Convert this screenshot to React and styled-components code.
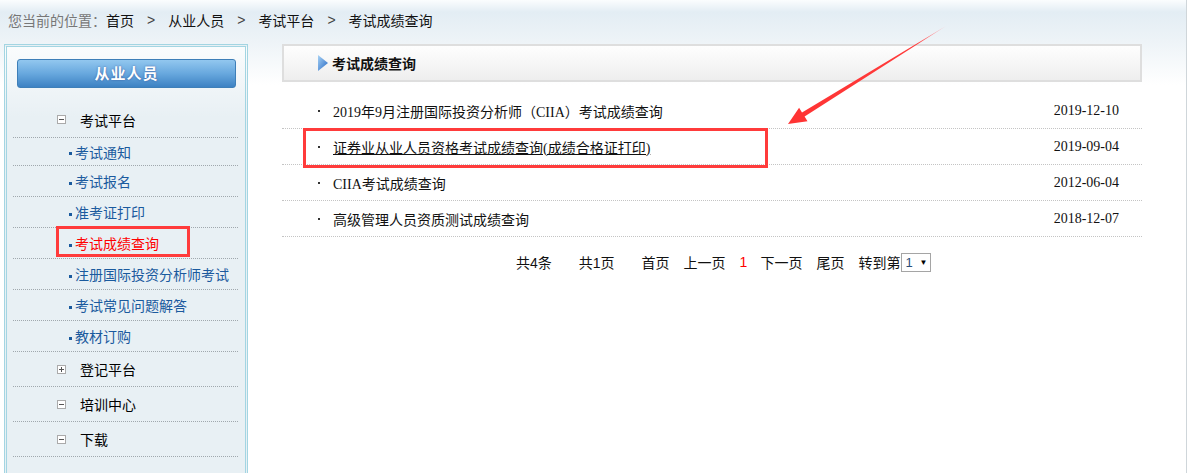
import React from "react";
import styled, { createGlobalStyle } from "styled-components";

const GlobalStyle = createGlobalStyle`
  body {
    margin: 0;
    background: #fff;
    font-family: "Liberation Sans", "Noto Sans CJK SC", sans-serif;
    font-size: 14px;
  }
  ul { margin: 0; padding: 0; list-style: none; }
  a { color: inherit; text-decoration: none; }
`;

const menu = [
  { title: "考试平台", open: true, items: ["考试通知", "考试报名", "准考证打印", "考试成绩查询", "注册国际投资分析师考试", "考试常见问题解答", "教材订购"] },
  { title: "登记平台", open: false, items: [] },
  { title: "培训中心", open: true, items: [] },
  { title: "下载", open: true, items: [] },
];

const news = [
  { title: "2019年9月注册国际投资分析师（CIIA）考试成绩查询", date: "2019-12-10" },
  { title: "证券业从业人员资格考试成绩查询(成绩合格证打印)", date: "2019-09-04", link: true },
  { title: "CIIA考试成绩查询", date: "2012-06-04" },
  { title: "高级管理人员资质测试成绩查询", date: "2018-12-07" },
];

const pager = [
  { text: "共4条", mr: 27 },
  { text: "共1页", mr: 27 },
  { text: "首页", mr: 14 },
  { text: "上一页", mr: 14 },
  { text: "1", mr: 13, current: true },
  { text: "下一页", mr: 14 },
  { text: "尾页", mr: 14 },
  { text: "转到第", mr: 1 },
];

function App() {
  return (
    <Page>
      <GlobalStyle />
      <Crumbs>
        <Here>您当前的位置：</Here>
        <a href="#">首页</a>
        <Sep>&gt;</Sep>
        <a href="#">从业人员</a>
        <Sep>&gt;</Sep>
        <a href="#">考试平台</a>
        <Sep>&gt;</Sep>
        <span>考试成绩查询</span>
      </Crumbs>
      <Columns>
        <Sidebar>
          <SideButton>从业人员</SideButton>
          <Menu>
            {menu.map((g) => (
              <React.Fragment key={g.title}>
                <GroupHead>
                  <Toggle open={g.open} />
                  {g.title}
                </GroupHead>
                {g.items.map((it) => (
                  <SubItem key={it} active={it === "考试成绩查询"}>
                    <a href="#">{it}</a>
                  </SubItem>
                ))}
              </React.Fragment>
            ))}
          </Menu>
        </Sidebar>
        <Main>
          <TitleBar>
            <svg width="10" height="16" viewBox="0 0 10 16">
              <defs>
                <linearGradient id="tri" x1="0" y1="0" x2="1" y2="1">
                  <stop offset="0" stopColor="#a9d3f5" />
                  <stop offset="1" stopColor="#2467c4" />
                </linearGradient>
              </defs>
              <path d="M0 0 L10 8 L0 16 Z" fill="url(#tri)" />
            </svg>
            <TitleText>考试成绩查询</TitleText>
          </TitleBar>
          <NewsList>
            {news.map((n) => (
              <NewsRow key={n.title}>
                <NewsTitle link={n.link}>{n.title}</NewsTitle>
                <NewsDate>{n.date}</NewsDate>
              </NewsRow>
            ))}
          </NewsList>
          <Pager>
            {pager.map((p) => (
              <PageItem key={p.text} mr={p.mr} current={p.current}>
                {p.text}
              </PageItem>
            ))}
            <PageSelect>
              <span>1</span>
              <Caret>▼</Caret>
            </PageSelect>
          </Pager>
        </Main>
      </Columns>

      <Mark style={{ left: 56, top: 226, width: 134, height: 31 }} />
      <Mark style={{ left: 303, top: 128, width: 465, height: 40 }} />
      <Arrow width="1187" height="473" viewBox="0 0 1187 473">
        <defs>
          <linearGradient id="fade" x1="946" y1="26" x2="800" y2="116" gradientUnits="userSpaceOnUse">
            <stop offset="0" stopColor="#ffb0b8" />
            <stop offset="0.2" stopColor="#ff3b3b" />
            <stop offset="1" stopColor="#ff3434" />
          </linearGradient>
        </defs>
        <polygon
          points="946,26 804.6,116.6 807.5,121.3 788,124 799.1,107.7 802,112.4"
          fill="url(#fade)"
        />
      </Arrow>
    </Page>
  );
}

export default App;

const Page = styled.div`
  position: relative;
  width: 1186px;
  height: 473px;
  overflow: hidden;
  border-right: 1px solid #cfd6da;
  background: linear-gradient(to bottom, #fbfdfe 0, #e3edf4 12px, #edf3f7 40px, #fff 85px);
`;

const Crumbs = styled.div`
  display: flex;
  align-items: center;
  height: 40px;
  padding-left: 8px;
  color: #111;
  font-size: 14px;
`;

const Here = styled.span`
  color: #777;
`;

const Sep = styled.span`
  margin: 0 13px;
  color: #444;
`;

const Columns = styled.div`
  display: flex;
  align-items: flex-start;
  gap: 34px;
  margin-top: 4px;
  padding-left: 4px;
`;

const Sidebar = styled.div`
  box-sizing: border-box;
  width: 244px;
  height: 440px;
  border: 3px double #a3d5e2;
  background: linear-gradient(to bottom, #fafcfd 0, #e8f0f4 70px, #e8f0f4 100%);
  padding-top: 12px;
`;

const SideButton = styled.div`
  box-sizing: border-box;
  margin: 0 9px 0 10px;
  height: 29px;
  line-height: 27px;
  border: 1px solid #3e7fb8;
  border-radius: 3px;
  background: linear-gradient(to bottom, #92c7ef 0, #68a8de 50%, #3d82c3 100%);
  color: #fff;
  font-size: 15px;
  font-weight: bold;
  letter-spacing: 1px;
  text-align: center;
  text-shadow: 0 0 2px rgba(30, 40, 120, 0.6);
`;

const Menu = styled.ul`
  margin: 14px 7px 0 6px;
`;

const GroupHead = styled.li`
  display: flex;
  align-items: center;
  height: 34px;
  padding-left: 44px;
  border-bottom: 1px dotted #a0a8ad;
  color: #000;
  font-size: 14px;
  &:first-child {
    height: 35px;
  }
`;

const Toggle = styled.span`
  position: relative;
  box-sizing: border-box;
  width: 9px;
  height: 9px;
  margin-right: 14px;
  border: 1px solid #aaa;
  background: #fff;
  &::before {
    content: "";
    position: absolute;
    left: 1px;
    top: 3px;
    width: 5px;
    height: 1px;
    background: #555;
  }
  &::after {
    content: "";
    display: ${(p) => (p.open ? "none" : "block")};
    position: absolute;
    left: 3px;
    top: 1px;
    width: 1px;
    height: 5px;
    background: #555;
  }
`;

const SubItem = styled.li`
  display: flex;
  align-items: center;
  height: 30px;
  padding-left: 56px;
  border-bottom: 1px dotted #a0a8ad;
  color: ${(p) => (p.active ? "#ff0000" : "#1a5a9e")};
  font-size: 14px;
  &::before {
    content: "";
    width: 3px;
    height: 3px;
    margin: 4px 3px 0 0;
    background: #1a5a9e;
  }
  ${GroupHead} + & {
    height: 27px;
  }
`;

const Main = styled.div`
  width: 860px;
`;

const TitleBar = styled.div`
  box-sizing: border-box;
  display: flex;
  align-items: center;
  height: 38px;
  padding-left: 34px;
  border: 2px solid #dedede;
  background: linear-gradient(to bottom, #fefefe, #eeeeee);
`;

const TitleText = styled.span`
  margin-left: 4px;
  color: #111;
  font-size: 14px;
  font-weight: bold;
`;

const NewsList = styled.ul`
  margin-top: 11px;
`;

const NewsRow = styled.li`
  display: flex;
  align-items: center;
  justify-content: space-between;
  height: 35px;
  padding: 0 23px 0 36px;
  border-bottom: 1px dotted #c4c4c4;
`;

const NewsTitle = styled.a`
  display: flex;
  align-items: center;
  color: #111;
  font-family: "Liberation Serif", "Noto Sans CJK SC", serif;
  font-size: 14px;
  text-decoration: ${(p) => (p.link ? "underline" : "none")};
  &::before {
    content: "";
    width: 2px;
    height: 2px;
    margin-right: 13px;
    background: #333;
  }
`;

const NewsDate = styled.span`
  color: #111;
  font-family: "Liberation Serif", serif;
  font-size: 14px;
`;

const Pager = styled.div`
  display: flex;
  align-items: center;
  height: 20px;
  margin-top: 15px;
  padding-left: 234px;
  color: #111;
  font-size: 14px;
`;

const PageItem = styled.span`
  margin-right: ${(p) => p.mr}px;
  color: ${(p) => (p.current ? "#ff0000" : "#111")};
`;

const PageSelect = styled.span`
  box-sizing: border-box;
  display: flex;
  align-items: center;
  justify-content: space-between;
  width: 30px;
  height: 19px;
  padding: 0 3px 0 3px;
  border: 1px solid #a5a5a5;
  background: #fff;
  color: #2a4f7a;
  font-size: 13px;
`;

const Caret = styled.span`
  color: #000;
  font-size: 8px;
`;

const Mark = styled.div`
  position: absolute;
  box-sizing: border-box;
  border: 3px solid #ff3b3b;
  pointer-events: none;
`;

const Arrow = styled.svg`
  position: absolute;
  left: 0;
  top: 0;
  pointer-events: none;
`;
